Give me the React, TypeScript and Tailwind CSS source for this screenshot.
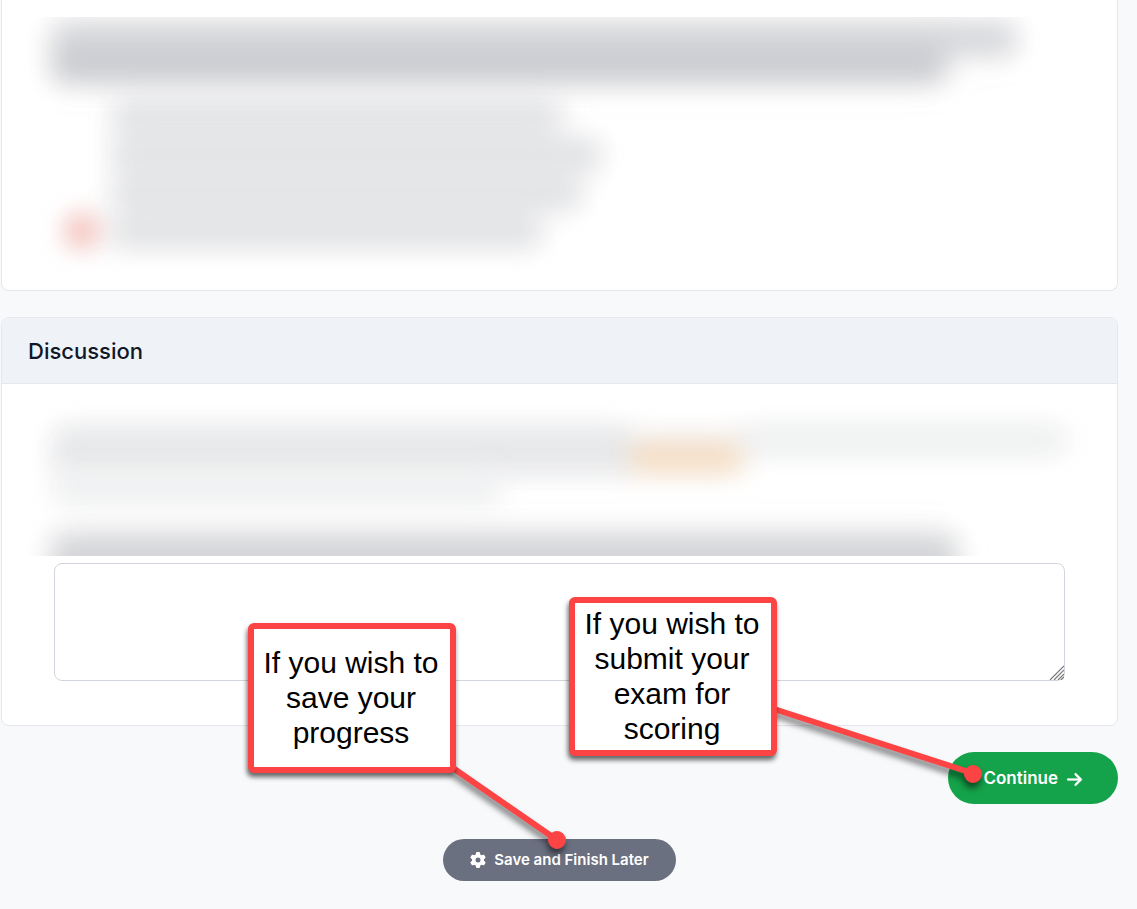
import { FaArrowRight, FaGear } from "react-icons/fa6";

const options = ["w-[44%]", "w-[48%]", "w-[46%]", "w-[42%]"];

function QuestionCard() {
  return (
    <section className="rounded-b-lg border border-t-0 border-gray-200 bg-white px-[26px] pt-[17px] pb-3">
      {/* Hidden question */}
      <div aria-hidden="true" className="h-[261px] overflow-hidden px-[26px] pt-2">
        <div className="blur-[13px] drop-shadow-[0_0_16px_rgba(0,0,0,0.08)]">
          <div className="h-7 w-[95%] bg-[#d3d4d8]" />
          <div className="h-7 w-[88%] bg-[#c9cacf]" />
        </div>
        <div className="mt-5 flex flex-col gap-[6px] blur-[13px] drop-shadow-[0_0_14px_rgba(0,0,0,0.06)]">
          {options.map((width, i) => (
            <div key={i} className="flex h-8 items-center gap-4">
              <span
                className={
                  i === 3 ? "size-8 shrink-0 rounded-full bg-[#f4b5ae] ml-3" : "size-8 shrink-0 ml-3"
                }
              />
              <div className={`h-7 bg-[#dfe0e3] ${width}`} />
            </div>
          ))}
        </div>
      </div>
    </section>
  );
}

function DiscussionCard() {
  return (
    <section className="rounded-lg border border-gray-200 bg-white">
      <header className="rounded-t-lg border-b border-gray-200 bg-[#eff3f8] px-[26px] pt-[17px] pb-[15px]">
        <h2 id="discussion-title" className="text-[22px] leading-[33px] font-medium text-gray-900">
          Discussion
        </h2>
      </header>

      {/* Hidden prompt */}
      <div aria-hidden="true" className="mx-[26px] h-[172px] overflow-hidden px-[26px] pt-11">
        <div className="flex blur-[13px] drop-shadow-[0_0_14px_rgba(0,0,0,0.04)]">
          <div className="h-11 w-[57%] bg-[#e6e7e9]" />
          <div className="w-[11%] pt-2">
            <div className="h-2 bg-[#ecebea]" />
            <div className="h-7 bg-[#f6dcc0]" />
          </div>
          <div className="h-6 w-[32%] bg-[#ecedee]" />
        </div>
        <div className="h-8 w-[44%] bg-[#eeeff0] blur-[13px]" />
        <div className="mt-8 h-14 w-[89%] bg-[#d3d4d7] blur-[13px] drop-shadow-[0_0_16px_rgba(0,0,0,0.08)]" />
      </div>

      <div className="relative mx-[52px] mt-[7px] mb-11">
        <textarea
          aria-labelledby="discussion-title"
          className="block h-[118px] w-full resize-none rounded-lg border border-gray-300 bg-white p-3 text-base outline-none"
        />
        <svg
          className="pointer-events-none absolute right-px bottom-px size-4"
          viewBox="0 0 16 16"
          stroke="#777"
          strokeWidth="1.2"
        >
          <path d="M2 16 16 2M6 16 16 6M10 16l6-6M13 16l3-3" />
        </svg>
      </div>
    </section>
  );
}

export default function App() {
  return (
    <div className="relative min-h-screen bg-[#f8f9fb] pr-[19px] pb-7 pl-px font-['Inter',sans-serif]">
      <main>
        <QuestionCard />
        <div className="mt-[26px]">
          <DiscussionCard />
        </div>

        <div className="mt-[26px] flex justify-end">
          <button
            type="button"
            className="flex h-[52px] items-center gap-2 rounded-full bg-[#14a24a] px-[35px] pt-[2px] text-[17px] font-semibold text-white"
          >
            Continue
            <FaArrowRight className="size-[17px]" stroke="currentColor" strokeWidth={8} />
          </button>
        </div>
        <div className="mt-[35px] flex justify-center">
          <button
            type="button"
            className="flex h-[42px] items-center gap-2 rounded-full bg-[#6b7080] px-[27px] text-[15px] font-semibold text-white"
          >
            <FaGear className="size-4" />
            Save and Finish Later
          </button>
        </div>
      </main>

      {/* Callouts */}
      <svg
        className="pointer-events-none absolute top-[600px] left-0 h-[300px] w-[1137px] drop-shadow-[-1px_5px_3px_rgba(0,0,0,0.55)]"
        viewBox="0 600 1137 300"
        fill="#fc4444"
        stroke="#fc4444"
      >
        <path d="M453 768 557 840M774 709 972 773" strokeWidth="6" />
        <circle cx="557" cy="840" r="8.5" />
        <circle cx="973" cy="774" r="8.5" />
      </svg>
      <div className="absolute top-[623px] left-[248px] flex h-[150px] w-[208px] items-center justify-center rounded-md border-6 border-[#fc4444] bg-white pr-[2px] pb-[2px] text-center font-['Liberation_Sans',sans-serif] text-[30px] leading-[35px] text-black shadow-[-1px_4px_5px_rgba(0,0,0,0.6)]">
        <p>
          If you wish to
          <br />
          save your
          <br />
          progress
        </p>
      </div>
      <div className="absolute top-[597px] left-[569px] flex h-[159px] w-[208px] items-center justify-center rounded-md border-6 border-[#fc4444] bg-white pr-[2px] pb-[2px] text-center font-['Liberation_Sans',sans-serif] text-[30px] leading-[35px] text-black shadow-[-1px_4px_5px_rgba(0,0,0,0.6)]">
        <p>
          If you wish to
          <br />
          submit your
          <br />
          exam for
          <br />
          scoring
        </p>
      </div>
    </div>
  );
}
